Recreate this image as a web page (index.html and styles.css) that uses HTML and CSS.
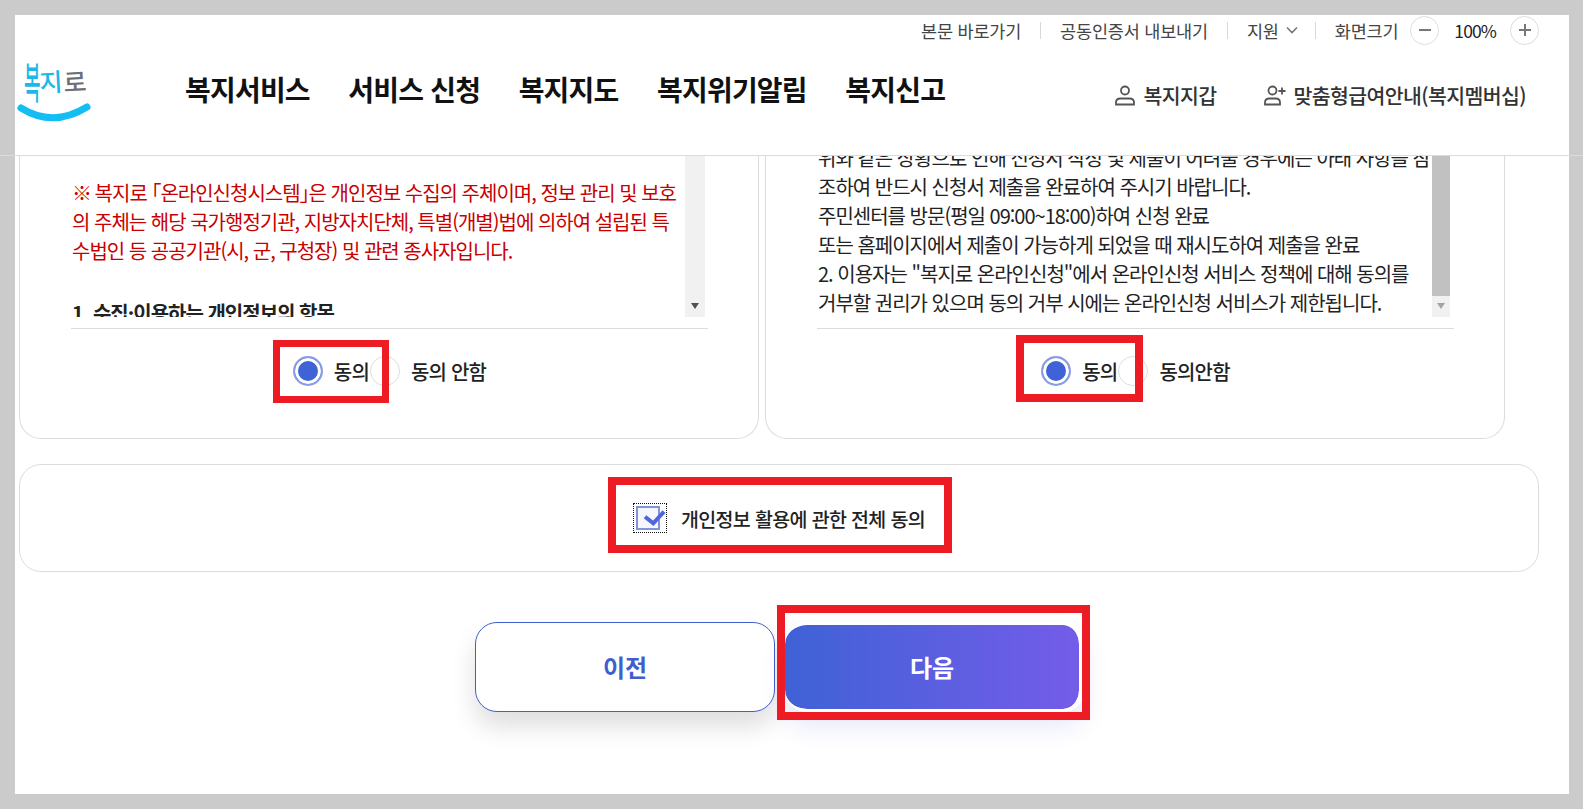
FILE: index.html
```html
<!DOCTYPE html>
<html lang="ko">
<head>
    <meta charset="UTF-8">
    <meta name="viewport" content="width=device-width, initial-scale=1.0">
    <title>복지로 온라인신청</title>
    <link rel="stylesheet" href="styles.css">
</head>
<body>

    <div class="sheet">
        <header class="site-header">
            <div class="util-bar">
                <a class="util-link">본문 바로가기</a>
                <span class="util-sep"></span>
                <a class="util-link">공동인증서 내보내기</a>
                <span class="util-sep"></span>
                <a class="util-link">지원
                    <svg class="chevron" width="12" height="8" viewBox="0 0 12 8"><path d="M1 1.5l5 5 5-5" fill="none" stroke="#777" stroke-width="1.6"/></svg>
                </a>
                <span class="util-sep"></span>
                <span class="util-link">화면크기</span>
                <button class="zoom-btn">
                    <svg width="14" height="14" viewBox="0 0 14 14"><path d="M1 7h12" stroke="#777" stroke-width="2"/></svg>
                </button>
                <span class="zoom-value">100%</span>
                <button class="zoom-btn">
                    <svg width="14" height="14" viewBox="0 0 14 14"><path d="M1 7h12M7 1v12" stroke="#777" stroke-width="2"/></svg>
                </button>
            </div>
            <div class="main-bar">
                <svg class="logo" width="76" height="66" viewBox="0 0 76 66">
                    <text class="logo-blue" transform="translate(8 42) scale(.72 1.72)" x="0" y="0">복</text>
                    <text class="logo-blue" transform="translate(24 35) rotate(-3)" x="0" y="0">지</text>
                    <text class="logo-gray" transform="translate(48 35) rotate(-3)" x="0" y="0">로</text>
                    <path d="M5 51Q37 71 71 50" fill="none" stroke="#14bdf2" stroke-width="7" stroke-linecap="round"/>
                </svg>
                <nav class="main-nav">
                    <a>복지서비스</a>
                    <a>서비스 신청</a>
                    <a>복지지도</a>
                    <a>복지위기알림</a>
                    <a>복지신고</a>
                </nav>
                <div class="member-links">
                    <a class="member-link">
                        <svg width="22" height="21" viewBox="0 0 22 21"><circle cx="11" cy="5.500" r="4" fill="none" stroke="#555" stroke-width="1.800"/><path d="M2 19.500v-2c0-2.500 2-4 4.500-4h9c2.500 0 4.500 1.500 4.500 4v2z" fill="none" stroke="#555" stroke-width="1.800"/></svg>
                        복지지갑
                    </a>
                    <a class="member-link">
                        <svg width="22" height="21" viewBox="0 0 22 21"><circle cx="8.500" cy="5.500" r="4" fill="none" stroke="#555" stroke-width="1.800"/><path d="M1 19.500v-2c0-2.500 2-4 4.500-4h6c2.500 0 4.500 1.500 4.500 4v2z" fill="none" stroke="#555" stroke-width="1.800"/><path d="M14.500 6h7M18 2.500v7" stroke="#555" stroke-width="1.800"/></svg>
                        맞춤형급여안내(복지멤버십)
                    </a>
                </div>
            </div>
        </header>

        <main class="content">
            <div class="terms-row">
                <section class="terms-card">
                    <div class="terms-wrap">
                        <div class="terms-box">
                            <div class="terms-text">
                                <p class="terms-notice"><span class="notice-mark">※ </span>복지로 「온라인신청시스템」은 개인정보 수집의 주체이며, 정보 관리 및 보호<br>의 주체는 해당 국가행정기관, 지방자치단체, 특별(개별)법에 의하여 설립된 특<br>수법인 등 공공기관(시, 군, 구청장) 및 관련 종사자입니다.</p>
                                <p class="terms-title">1. 수집·이용하는 개인정보의 항목</p>
                            </div>
                            <div class="scrollbar">
                                <span class="scroll-arrow dark"></span>
                            </div>
                        </div>
                    </div>
                    <div class="radio-group">
                        <label class="radio-item"><span class="radio checked"></span>동의</label>
                        <label class="radio-item"><span class="radio"></span>동의 안함</label>
                    </div>
                </section>

                <section class="terms-card">
                    <div class="terms-wrap">
                        <div class="terms-box narrow">
                            <div class="terms-text bottom">
                                <p>위와 같은 상황으로 인해 신청서 작성 및 제출이 어려울 경우에는 아래 사항을 참<br>조하여 반드시 신청서 제출을 완료하여 주시기 바랍니다.<br>주민센터를 방문(평일 09:00~18:00)하여 신청 완료<br>또는 홈페이지에서 제출이 가능하게 되었을 때 재시도하여 제출을 완료<br>2. 이용자는 "복지로 온라인신청"에서 온라인신청 서비스 정책에 대해 동의를<br>거부할 권리가 있으며 동의 거부 시에는 온라인신청 서비스가 제한됩니다.</p>
                            </div>
                            <div class="scrollbar">
                                <span class="scroll-thumb"></span>
                                <span class="scroll-arrow"></span>
                            </div>
                        </div>
                    </div>
                    <div class="radio-group">
                        <label class="radio-item"><span class="radio checked"></span>동의</label>
                        <label class="radio-item"><span class="radio"></span>동의안함</label>
                    </div>
                </section>
            </div>

            <div class="agree-all">
                <label class="agree-label">
                    <span class="check-focus">
                        <span class="check-box">
                            <svg width="24" height="24" viewBox="0 0 24 24"><path d="M9 10.700l8.300 6.600L28 5.700" fill="none" stroke="#4d65e0" stroke-width="4"/></svg>
                        </span>
                    </span>
                    개인정보 활용에 관한 전체 동의
                </label>
            </div>

            <div class="btn-row">
                <button class="btn btn-prev">이전</button>
                <button class="btn btn-next">다음</button>
            </div>
        </main>
    </div>

    <!-- red marks drawn over the capture -->
    <div class="mark mark-agree-left"></div>
    <div class="mark mark-agree-right"></div>
    <div class="mark mark-agree-all"></div>
    <div class="mark mark-next"></div>

</body>
</html>
```
FILE: styles.css
```css
* {
    box-sizing: border-box;
}
html, body {
    height: 100%;
}
body {
    position: relative;
    margin: 0;
    overflow: hidden;
    background-color: #cbcbcb;
    font-family: "Noto Sans CJK KR", "Noto Sans", sans-serif;
    color: #222;
}
p {
    margin: 0;
}
.sheet {
    position: relative;
    height: 779px;
    margin: 15px 14px 15px 15px;
    background: white;
    overflow: visible;
}

/* header */
.site-header {
    position: relative;
    height: 141px;
}
.site-header::after {
    content: "";
    position: absolute;
    left: -15px;
    right: -14px;
    bottom: 0;
    height: 1px;
    background: #dcdcdc;
}
.util-bar {
    display: flex;
    justify-content: flex-end;
    align-items: center;
    height: 30px;
    padding-right: 30px;
    font-size: 17.5px;
    letter-spacing: -0.2px;
    color: #444;
}
.util-link {
    display: flex;
    align-items: center;
    gap: 7px;
}
.chevron {
    margin-right: -2px;
}
.util-sep {
    width: 1px;
    height: 17px;
    margin: 0 19px;
    background: #d8d8d8;
}
.zoom-btn {
    display: flex;
    align-items: center;
    justify-content: center;
    width: 29px;
    height: 29px;
    margin-left: 12px;
    padding: 0;
    border: 1px solid #ddd;
    border-radius: 50%;
    background: white;
}
.zoom-value {
    margin-left: 15px;
    margin-right: 2px;
    letter-spacing: -0.9px;
    color: #222;
}
.main-bar {
    display: flex;
    height: 110px;
}
.logo {
    flex: none;
    margin: 12px 0 0 1px;
    overflow: visible;
}
.logo text {
    font-size: 25px;
    font-weight: 500;
}
.logo-blue {
    fill: #1cb8e8;
}
.logo-gray {
    fill: #6f6f74;
}
.main-nav {
    display: flex;
    gap: 38.5px;
    margin: 24px 0 0 93px;
    height: 40px;
    line-height: 40px;
    font-size: 28px;
    font-weight: 700;
    letter-spacing: -0.8px;
    color: #111;
    white-space: nowrap;
}
.member-links {
    display: flex;
    gap: 48px;
    margin: 36px 43px 0 auto;
    height: 28px;
    font-size: 20.5px;
    font-weight: 500;
    letter-spacing: -0.6px;
    color: #333;
    white-space: nowrap;
}
.member-link {
    display: flex;
    align-items: center;
    gap: 7px;
}

/* agreement cards */
.content {
    width: 1524px;
    padding-left: 4px;
}
.terms-row {
    display: flex;
    gap: 6px;
    width: 1486px;
}
.terms-card {
    flex: 1;
    height: 283px;
    padding: 0 50px 0 51px;
    border: 1px solid #dcdcdc;
    border-top: none;
    border-radius: 0 0 22px 22px;
}
.terms-wrap {
    padding-bottom: 11px;
    border-bottom: 1px solid #dcdcdc;
}
.terms-box {
    display: flex;
    height: 161px;
    margin-right: 3px;
    font-size: 20px;
    line-height: 29px;
    letter-spacing: -1px;
}
.terms-box.narrow {
    margin-right: 4px;
}
.terms-text {
    flex: 1;
    padding-left: 1px;
    overflow: hidden;
    white-space: nowrap;
}
.terms-text.bottom {
    display: flex;
    flex-direction: column;
    justify-content: flex-end;
}
.terms-notice {
    padding-top: 22px;
    color: #c80000;
    font-feature-settings: "halt";
}
.notice-mark {
    letter-spacing: -1.5px;
}
.terms-title {
    margin-top: 33px;
    font-weight: 700;
}
.scrollbar {
    display: flex;
    flex-direction: column;
    flex: none;
    width: 20px;
    background: #f1f1f1;
}
.narrow .scrollbar {
    width: 18px;
}
.scroll-thumb {
    height: 140px;
    background: #c1c1c1;
}
.scroll-arrow {
    width: 0;
    height: 0;
    margin: auto auto 8px;
    border-left: 4.5px solid transparent;
    border-right: 4.5px solid transparent;
    border-top: 6px solid #a3a3a3;
}
.scroll-arrow.dark {
    border-top-color: #505050;
}

/* radio */
.radio-group {
    display: flex;
    justify-content: center;
    gap: 1px;
    padding-top: 27px;
}
.radio-item {
    display: flex;
    align-items: center;
    gap: 11px;
    height: 30px;
    font-size: 20px;
    font-weight: 500;
    letter-spacing: -0.8px;
}
.radio {
    width: 30px;
    height: 30px;
    border: 1px solid #ddd;
    border-radius: 50%;
    background: white;
}
.radio.checked {
    border: 2px solid #8a9de3;
    background: #3f62d6;
    box-shadow: inset 0 0 0 3px white;
}

/* agree all */
.agree-all {
    display: flex;
    justify-content: center;
    align-items: center;
    width: 1520px;
    height: 108px;
    margin-top: 25px;
    border: 1px solid #dcdcdc;
    border-radius: 22px;
}
.agree-label {
    display: flex;
    align-items: center;
    gap: 14px;
    font-size: 19.5px;
    font-weight: 500;
    letter-spacing: -0.65px;
}
.check-focus {
    display: block;
    padding: 2px 6px 2px 2px;
    border: 1px dotted #111;
}
.check-box {
    display: block;
    width: 24px;
    height: 24px;
    border: 2px solid #8094dd;
    background: #f6f7fd;
}
.check-box svg {
    display: block;
    margin: -2px;
    overflow: visible;
}

/* buttons */
.btn-row {
    display: flex;
    justify-content: center;
    gap: 10px;
    width: 1522px;
    margin-top: 50px;
}
.btn {
    width: 300px;
    height: 90px;
    padding: 0 0 2px;
    border-radius: 22px;
    font-family: inherit;
    font-size: 24px;
    font-weight: 700;
}
.btn-prev {
    border: 1px solid #3f5fce;
    background: white;
    color: #3f5fce;
    box-shadow: 0 15px 25px rgba(0, 0, 0, 0.13);
}
.btn-next {
    border: solid white;
    border-width: 3px 6px 3px 0;
    background: linear-gradient(90deg, #3f62d6, #745ce9) padding-box;
    color: white;
    box-shadow: 0 15px 25px rgba(80, 80, 220, 0.13);
}

/* red marks */
.mark {
    position: absolute;
    border: 8px solid #ed1c24;
}
.mark-agree-left {
    left: 273px;
    top: 340px;
    width: 116px;
    height: 63px;
    border-width: 7px;
}
.mark-agree-right {
    left: 1016px;
    top: 335px;
    width: 127px;
    height: 67px;
}
.mark-agree-all {
    left: 608px;
    top: 477px;
    width: 344px;
    height: 76px;
}
.mark-next {
    left: 777px;
    top: 605px;
    width: 313px;
    height: 115px;
}
```
